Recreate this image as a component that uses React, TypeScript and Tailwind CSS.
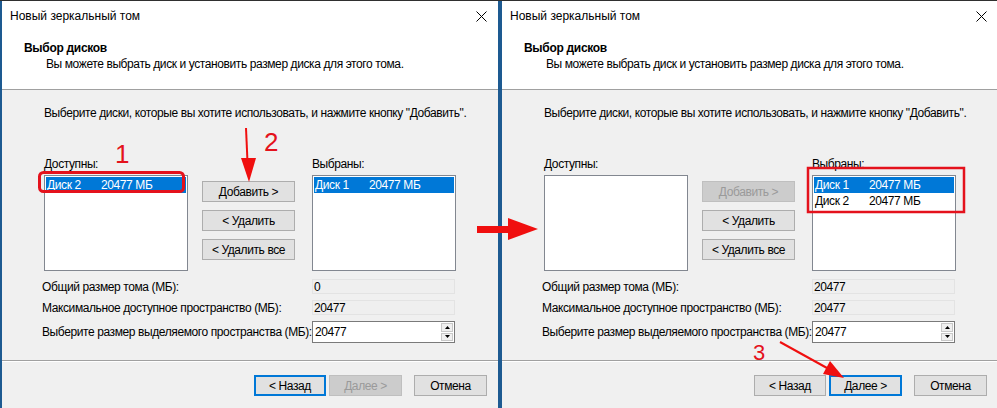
import React from "react";

interface DiskItem {
  name: string;
  size: string;
  selected?: boolean;
}

interface DialogProps {
  available: DiskItem[];
  chosen: DiskItem[];
  addDisabled?: boolean;
  total: string;
  nextFocused?: boolean;
  edgeClass: string;
}

function WinButton({
  label,
  disabled,
  focused,
  className = "",
}: {
  label: string;
  disabled?: boolean;
  focused?: boolean;
  className?: string;
}) {
  const look = disabled
    ? "bg-[#cccccc] border-[#bfbfbf] text-[#9a9a9a]"
    : focused
    ? "bg-[#e1e1e1] border-[#0078d7] border-2 text-black"
    : "bg-[#e1e1e1] border-[#adadad] text-black";
  return (
    <div
      className={`flex h-[21px] items-center justify-center whitespace-nowrap border leading-none ${look} ${className}`}
    >
      {label}
    </div>
  );
}

function DiskList({ items }: { items: DiskItem[] }) {
  return (
    <div className="h-[96px] w-[144px] border border-[#828790] bg-white p-px">
      {items.map((d) => (
        <div
          key={d.name}
          className={`flex h-[16px] items-center whitespace-nowrap leading-none ${
            d.selected ? "bg-[#0078d7] text-white" : "text-black"
          }`}
        >
          <span className="w-[55px] pl-px">{d.name}</span>
          <span>{d.size}</span>
        </div>
      ))}
    </div>
  );
}

function ReadOnlyBox({ value }: { value: string }) {
  return (
    <div className="flex h-[15px] w-[143px] items-center border border-[#e3e3e3] bg-[#efefef] pl-px leading-none text-black">
      {value}
    </div>
  );
}

function Dialog({ available, chosen, addDisabled, total, nextFocused, edgeClass }: DialogProps) {
  return (
    <div className={`flex h-full flex-col border-[#1d5a91] ${edgeClass}`}>
      <div className="flex w-[496px] flex-1 flex-col whitespace-nowrap bg-[#f0f0f0]">
        {/* Title and header */}
        <div className="h-[89px] border-b border-[#a0a0a0] bg-white">
          <div className="flex h-[30px] items-center justify-between pl-[8px] pr-[11px]">
            <span className="leading-none">Новый зеркальный том</span>
            <svg width="11" height="11" viewBox="0 0 11 11" className="text-black">
              <path d="M0.5 0.5 L10.5 10.5 M10.5 0.5 L0.5 10.5" stroke="currentColor" strokeWidth="1" />
            </svg>
          </div>
          <div className="pl-[22px] pt-[10px] font-bold leading-[15px] tracking-[-0.3px]">Выбор дисков</div>
          <div className="pl-[44px] leading-[16px] tracking-[-0.4px]">
            Вы можете выбрать диск и установить размер диска для этого тома.
          </div>
        </div>

        {/* Body */}
        <div className="flex flex-col tracking-[-0.4px]">
          <div className="pl-[42px] pt-[15px] leading-[16px]">
            Выберите диски, которые вы хотите использовать, и нажмите кнопку "Добавить".
          </div>

          <div className="mt-[35px] flex pl-[42px]">
            <div className="flex w-[144px] flex-col">
              <div className="mb-[3px] leading-[16px]">Доступны:</div>
              <DiskList items={available} />
            </div>
            <div className="ml-[14px] flex w-[93px] flex-col gap-[8px] pt-[25px]">
              <WinButton label="Добавить >" disabled={addDisabled} />
              <WinButton label="< Удалить" />
              <WinButton label="< Удалить все" />
            </div>
            <div className="ml-[17px] flex w-[144px] flex-col">
              <div className="mb-[3px] leading-[16px]">Выбраны:</div>
              <DiskList items={chosen} />
            </div>
          </div>

          <div className="mt-[8px] flex flex-col gap-[6px] pl-[40px]">
            <div className="flex items-center">
              <span className="w-[270px] leading-none">Общий размер тома (МБ):</span>
              <ReadOnlyBox value={total} />
            </div>
            <div className="flex items-center">
              <span className="w-[270px] leading-none">Максимальное доступное пространство (МБ):</span>
              <ReadOnlyBox value="20477" />
            </div>
            <div className="flex items-center">
              <span className="w-[270px] leading-none">Выберите размер выделяемого пространства (МБ):</span>
              <div className="flex h-[22px] w-[143px] items-stretch border border-[#7a7a7a] bg-white">
                <span className="flex flex-1 items-center pl-[2px] leading-none">20477</span>
                <div className="flex w-[13px] flex-col gap-px py-px pr-px">
                  <div className="flex flex-1 items-center justify-center border border-[#c8c8c8] bg-[#f0f0f0]">
                    <svg width="5" height="3" viewBox="0 0 5 3"><path d="M0 3 L2.5 0 L5 3 Z" fill="#000" /></svg>
                  </div>
                  <div className="flex flex-1 items-center justify-center border border-[#c8c8c8] bg-[#f0f0f0]">
                    <svg width="5" height="3" viewBox="0 0 5 3"><path d="M0 0 L5 0 L2.5 3 Z" fill="#000" /></svg>
                  </div>
                </div>
              </div>
            </div>
          </div>

          {/* Footer */}
          <div className="mt-[17px] h-px bg-[#a0a0a0]" />
          <div className="h-px bg-white" />
          <div className="mt-[13px] flex pl-[252px]">
            <WinButton label="< Назад" focused={!nextFocused} className="w-[72px]" />
            <WinButton label="Далее >" disabled={!nextFocused} focused={nextFocused} className="ml-[3px] w-[73px]" />
            <WinButton label="Отмена" className="ml-[12px] w-[73px]" />
          </div>
        </div>
      </div>
    </div>
  );
}

export default function App() {
  return (
    <div
      className="relative h-[408px] w-[997px] overflow-hidden bg-[#f0f0f0] text-[12px] text-black"
      style={{ fontFamily: '"Liberation Sans", Arial, sans-serif' }}
    >
      <div className="h-px bg-[#2f2f2f]" />
      <div className="flex h-[407px]">
        <Dialog
          edgeClass="border-l-2"
          available={[{ name: "Диск 2", size: "20477 МБ", selected: true }]}
          chosen={[{ name: "Диск 1", size: "20477 МБ", selected: true }]}
          total="0"
        />
        <Dialog
          edgeClass="border-l-4"
          available={[]}
          chosen={[
            { name: "Диск 1", size: "20477 МБ", selected: true },
            { name: "Диск 2", size: "20477 МБ" },
          ]}
          addDisabled
          total="20477"
          nextFocused
        />
      </div>

      {/* Red annotations */}
      <svg className="pointer-events-none absolute left-0 top-0" width="997" height="408" viewBox="0 0 997 408">
        <rect x="39.5" y="172.5" width="144" height="19" rx="4" fill="none" stroke="#e4121c" strokeWidth="3" />
        <line x1="246" y1="128" x2="247.5" y2="162" stroke="#f00f0f" strokeWidth="2" />
        <polygon points="241,158 256,158 249,182" fill="#f00f0f" />
        <rect x="477" y="226" width="33" height="7" fill="#f00f0f" />
        <polygon points="508,218 508,240 538,229" fill="#f00f0f" />
        <rect x="808" y="168" width="156" height="44" fill="none" stroke="#e4121c" strokeWidth="2.5" />
        <line x1="780" y1="342" x2="827" y2="368" stroke="#f00f0f" strokeWidth="2" />
        <polygon points="823,374 830,361 844,378" fill="#f00f0f" />
      </svg>
      <span className="absolute left-[115px] top-[141px] text-[26px] leading-[26px] text-[#e4121c]">1</span>
      <span className="absolute left-[264px] top-[129px] text-[26px] leading-[26px] text-[#e4121c]">2</span>
      <span className="absolute left-[753px] top-[342px] text-[22px] leading-[22px] text-[#e4121c]">3</span>
    </div>
  );
}
